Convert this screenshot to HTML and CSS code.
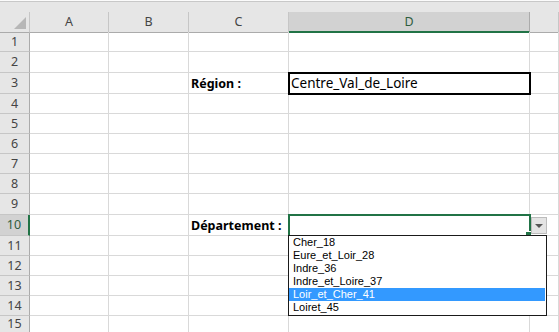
FILE: index.html
```html
<!DOCTYPE html>
<html lang="fr">
<head>
<meta charset="UTF-8" />
<title>Feuil1</title>
<link rel="stylesheet" href="styles.css">
</head>
<body>
<div class="sheet">
  <div class="topbar"></div>

  <div class="grid">
    <!-- en-têtes de colonnes -->
    <div class="row head">
      <div class="corner"><span class="tri"></span></div>
      <div class="ch">A</div>
      <div class="ch">B</div>
      <div class="ch">C</div>
      <div class="ch sel">D</div>
      <div class="ch"></div>
    </div>

    <div class="row h20"><div class="rh">1</div><div class="c"></div><div class="c"></div><div class="c"></div><div class="c"></div><div class="c"></div></div>
    <div class="row h21"><div class="rh">2</div><div class="c"></div><div class="c"></div><div class="c"></div><div class="c"></div><div class="c"></div></div>
    <div class="row h21"><div class="rh">3</div><div class="c"></div><div class="c"></div><div class="c label">Région :</div><div class="c boxed">Centre_Val_de_Loire</div><div class="c"></div></div>
    <div class="row h20"><div class="rh">4</div><div class="c"></div><div class="c"></div><div class="c"></div><div class="c"></div><div class="c"></div></div>
    <div class="row h20"><div class="rh">5</div><div class="c"></div><div class="c"></div><div class="c"></div><div class="c"></div><div class="c"></div></div>
    <div class="row h20"><div class="rh">6</div><div class="c"></div><div class="c"></div><div class="c"></div><div class="c"></div><div class="c"></div></div>
    <div class="row h20"><div class="rh">7</div><div class="c"></div><div class="c"></div><div class="c"></div><div class="c"></div><div class="c"></div></div>
    <div class="row h20"><div class="rh">8</div><div class="c"></div><div class="c"></div><div class="c"></div><div class="c"></div><div class="c"></div></div>
    <div class="row h21"><div class="rh">9</div><div class="c"></div><div class="c"></div><div class="c"></div><div class="c"></div><div class="c"></div></div>
    <div class="row h21">
      <div class="rh sel">10</div><div class="c"></div><div class="c"></div>
      <div class="c label">Département :</div>
      <div class="c active">
        <span class="handle"></span>
        <span class="drop-btn"><span class="arrow"></span></span>
        <ul class="dropdown">
          <li>Cher_18</li>
          <li>Eure_et_Loir_28</li>
          <li>Indre_36</li>
          <li>Indre_et_Loire_37</li>
          <li class="hl">Loir_et_Cher_41</li>
          <li>Loiret_45</li>
        </ul>
      </div>
      <div class="c"></div>
    </div>
    <div class="row h20"><div class="rh">11</div><div class="c"></div><div class="c"></div><div class="c"></div><div class="c"></div><div class="c"></div></div>
    <div class="row h20"><div class="rh">12</div><div class="c"></div><div class="c"></div><div class="c"></div><div class="c"></div><div class="c"></div></div>
    <div class="row h20"><div class="rh">13</div><div class="c"></div><div class="c"></div><div class="c"></div><div class="c"></div><div class="c"></div></div>
    <div class="row h20"><div class="rh">14</div><div class="c"></div><div class="c"></div><div class="c"></div><div class="c"></div><div class="c"></div></div>
    <div class="row h20 last"><div class="rh">15</div><div class="c"></div><div class="c"></div><div class="c"></div><div class="c"></div><div class="c"></div></div>
  </div>
</div>
</body>
</html>
```

FILE: styles.css
```css
body {
  margin: 0;
  background: #fff;
  font-family: 'Noto Sans', 'Open Sans', sans-serif;
  color: #000;
  overflow: hidden;
}
.sheet {
  width: 559px;
  height: 332px;
  overflow: hidden;
}
/* bas de la barre de formule */
.topbar {
  height: 12px;
  box-sizing: border-box;
  background: #e6e6e6;
  border-top: 1px solid #fbfbfb;
  box-shadow: inset 0 1px 0 #c8c8c8;
}
.row {
  display: grid;
  grid-template-columns: 30px 79px 80px 100px 241px 1fr;
}
.row > div {
  box-sizing: border-box;
}
.h20 { height: 20px; }
.h21 { height: 21px; }

/* EN-TÊTES */
.head {
  height: 20px;
  background: #e6e6e6;
}
.corner {
  position: relative;
  border-right: 1px solid #c6c6c6;
  border-bottom: 1px solid #ababab;
}
.tri {
  position: absolute;
  right: 3px;
  bottom: 3px;
  width: 0;
  height: 0;
  border-left: 12px solid transparent;
  border-bottom: 12px solid #b7b7b7;
}
.ch {
  border-right: 1px solid #c6c6c6;
  border-bottom: 1px solid #ababab;
  font-size: 12.5px;
  color: #444;
  text-align: center;
  line-height: 19px;
}
.ch.sel {
  background: #d2d2d2;
  color: #2f5d3f;
  border-bottom: 2px solid #217346;
  border-right-color: #ababab;
}
.rh {
  background: #e6e6e6;
  border-right: 1px solid #ababab;
  border-bottom: 1px solid #c6c6c6;
  font-size: 12.5px;
  line-height: 14px;
  color: #444;
  text-align: center;
  display: flex;
  align-items: center;
  justify-content: center;
}
.rh.sel {
  background: #d2d2d2;
  color: #2f5d3f;
  border-right: 2px solid #217346;
}
.last .rh {
  align-items: flex-start;
  padding-top: 1px;
}

/* CELLULES */
.c {
  position: relative;
  border-right: 1px solid #d9d9d9;
  border-bottom: 1px solid #d9d9d9;
  font-size: 13.5px;
  padding: 0 2px;
  display: flex;
  align-items: center;
  white-space: nowrap;
}
.c.label {
  font-size: 12.5px;
  font-weight: 700;
}
.c.boxed {
  outline: 2px solid #000;
  outline-offset: -1px;
  z-index: 2;
}
.c.active {
  outline: 2px solid #217346;
  outline-offset: -1px;
  z-index: 3;
}
.handle {
  position: absolute;
  right: -3px;
  bottom: -3px;
  width: 5px;
  height: 5px;
  background: #217346;
  border: 1px solid #fff;
}
.drop-btn {
  position: absolute;
  left: 242px;
  top: 2px;
  width: 16px;
  height: 17px;
  box-sizing: border-box;
  background: #e4e4e4;
  border: 1px solid #bcbcbc;
  display: flex;
  align-items: center;
  justify-content: center;
}
.arrow {
  width: 0;
  height: 0;
  border-left: 4px solid transparent;
  border-right: 4px solid transparent;
  border-top: 4px solid #555;
}

/* LISTE DÉROULANTE */
.dropdown {
  position: absolute;
  left: -1px;
  top: 20px;
  width: 259px;
  margin: 0;
  padding: 0 0 1px 0;
  box-sizing: border-box;
  list-style: none;
  background: #fff;
  border: 1px solid #1a1a1a;
  z-index: 5;
  font-family: 'Liberation Sans', Arial, sans-serif;
}
.dropdown li {
  height: 13px;
  line-height: 13px;
  font-size: 11px;
  padding-left: 4px;
  margin-right: 1px;
  color: #000;
}
.dropdown li.hl {
  background: #3399ff;
  color: #fff;
}
```
